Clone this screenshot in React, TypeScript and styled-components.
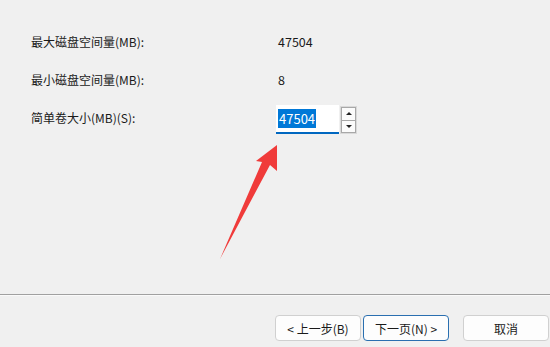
import React from "react";
import styled, { createGlobalStyle } from "styled-components";

const Global = createGlobalStyle`
  html, body { margin: 0; padding: 0; background: #f0f0f0; }
  body { font-family: "Noto Sans CJK SC", "Noto Sans", sans-serif; font-size: 12px; color: #1a1a1a; }
`;

const Page = styled.div`
  position: relative;
  width: 550px;
  height: 347px;
  display: flex;
  flex-direction: column;
  background: #f0f0f0;
  overflow: hidden;
`;

const Content = styled.div`
  flex: 1;
  padding: 23px 0 0 31px;
  display: flex;
  flex-direction: column;
`;

const Row = styled.div`
  display: grid;
  grid-template-columns: 245px auto;
  align-items: center;
  height: 38px;
`;

const Label = styled.div`
  line-height: 20px;
`;

const Value = styled.div`
  padding-left: 2px;
  line-height: 20px;
  font-size: 12.5px;
`;

const Spin = styled.div`
  display: flex;
  width: 81px;
  height: 29px;
  margin-top: 3px;
`;

const SpinInput = styled.div`
  flex: 1;
  background: #ffffff;
  border-bottom: 2px solid #0067c0;
  display: flex;
  align-items: center;
  padding-left: 2px;
`;

const Selected = styled.span`
  background: #0078d7;
  color: #ffffff;
  line-height: 19px;
  font-size: 13px;
  padding: 0 1px;
`;

const SpinButtons = styled.div`
  width: 15px;
  display: flex;
  flex-direction: column;
  border: 1px solid #d9d9d9;
  background: #f7f7f7;
  margin: 1px 0 0 1px;
`;

const SpinBtn = styled.div<{ $down?: boolean }>`
  flex: 1;
  display: flex;
  align-items: center;
  justify-content: center;
  background: #fbfbfb;
  border: 1px solid #a8a8a8;
  ${(p) => (p.$down ? "border-top: none;" : "")}
`;

const Tri = styled.span<{ $down?: boolean }>`
  width: 0;
  height: 0;
  border-left: 3px solid transparent;
  border-right: 3px solid transparent;
  ${(p) =>
    p.$down ? "border-top: 3px solid #222;" : "border-bottom: 3px solid #222;"}
`;

const Separator = styled.div`
  height: 1px;
  background: #a0a0a0;
  border-bottom: 1px solid #fafafa;
`;

const Footer = styled.div`
  display: flex;
  justify-content: flex-end;
  align-items: flex-start;
  padding: 19px 1px 0 0;
  height: 32px;
`;

const Button = styled.button<{ $primary?: boolean; $gap?: number }>`
  width: 86px;
  height: 26px;
  margin-left: ${(p) => p.$gap ?? 2}px;
  border-radius: 4px;
  border: 1px solid ${(p) => (p.$primary ? "#2a6fb0" : "#d0d0d0")};
  background: #fdfdfd;
  font-family: "Noto Sans CJK SC", "Noto Sans", sans-serif;
  font-size: 12px;
  color: #1a1a1a;
  padding: 0;
`;

const Overlay = styled.svg`
  position: absolute;
  left: 0;
  top: 0;
  pointer-events: none;
`;

export default function App() {
  return (
    <>
      <Global />
      <Page>
        <Content>
          <Row>
            <Label>最大磁盘空间量(MB):</Label>
            <Value>47504</Value>
          </Row>
          <Row>
            <Label>最小磁盘空间量(MB):</Label>
            <Value>8</Value>
          </Row>
          <Row>
            <Label>简单卷大小(MB)(S):</Label>
            <Spin>
              <SpinInput>
                <Selected>47504</Selected>
              </SpinInput>
              <SpinButtons>
                <SpinBtn>
                  <Tri />
                </SpinBtn>
                <SpinBtn $down>
                  <Tri $down />
                </SpinBtn>
              </SpinButtons>
            </Spin>
          </Row>
        </Content>
        <Separator />
        <Footer>
          <Button $gap={0}>&lt; 上一步(B)</Button>
          <Button $primary>下一页(N) &gt;</Button>
          <Button $gap={14}>取消</Button>
        </Footer>
        <Overlay width="550" height="347" viewBox="0 0 550 347">
          <polygon
            points="277,145 277,171 270,165 220,259 262,162 256,161"
            fill="#f03b3a"
          />
        </Overlay>
      </Page>
    </>
  );
}
